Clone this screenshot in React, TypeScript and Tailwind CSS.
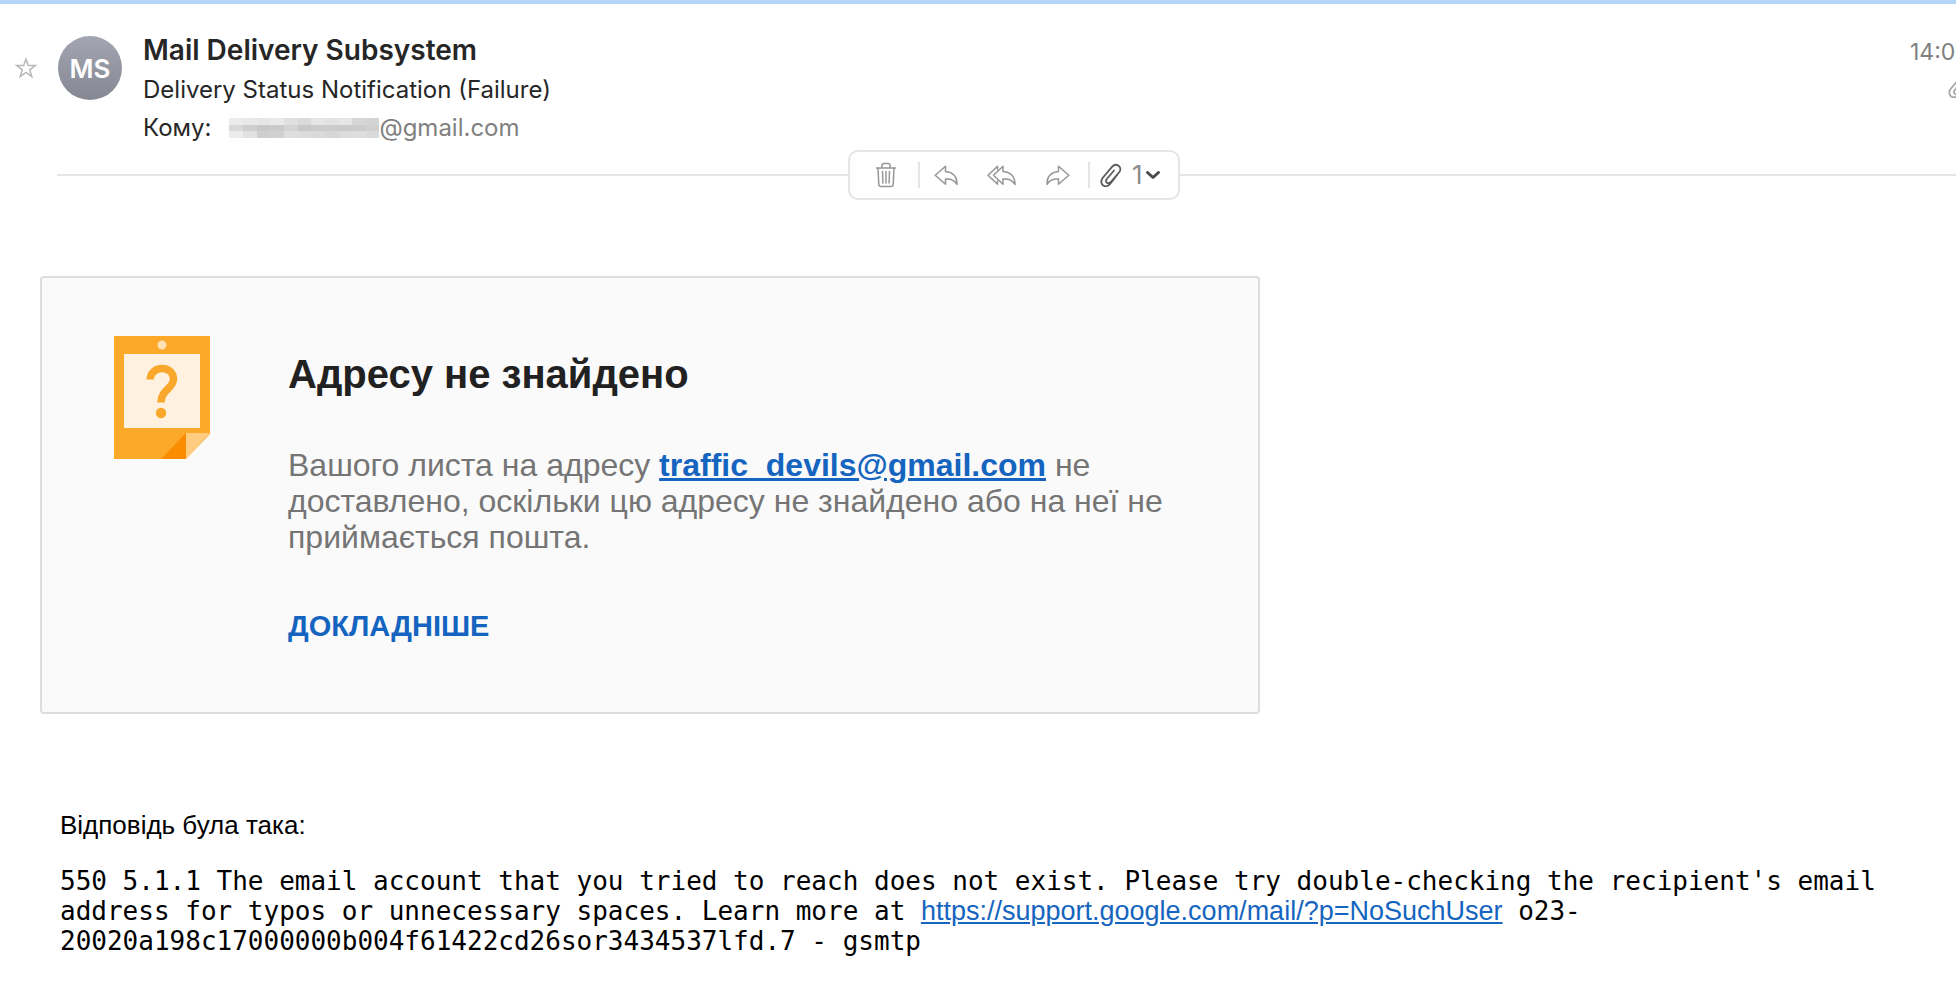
import type { ReactNode } from "react";

const MOSAIC = [
  ["#ececec", "#e8e8e8", "#e6e6e6", "#e9e9e9", "#e0e0e0", "#dadada", "#e6e6e6", "#e2e2e2", "#e6e6e6", "#d6d6d6", "#d4d4d4"],
  ["#d8d8d8", "#cecece", "#c8c8c8", "#cacaca", "#d4d4d4", "#c8c8c8", "#cccccc", "#cccccc", "#cacaca", "#cccccc", "#d0d0d0"],
  ["#ececec", "#e2e2e2", "#cecece", "#d0d0d0", "#dedede", "#dcdcdc", "#dadada", "#d6d6d6", "#dcdcdc", "#dedede", "#dadada"],
];

function ToolButton({ label, className, children }: { label: string; className: string; children: ReactNode }) {
  return (
    <button type="button" aria-label={label} className={`flex items-center justify-center ${className}`}>
      {children}
    </button>
  );
}

function TrashIcon() {
  return (
    <svg width="22" height="26" viewBox="0 0 22 26" fill="none" stroke="#969696" strokeWidth="1.5" strokeLinecap="round" strokeLinejoin="round">
      <path d="M1.500 6h19M7 6V3.500Q7 1.500 9 1.500h4Q15 1.500 15 3.500V6M3 6l.8 16.500Q4 24.500 6 24.500h10q2 0 2.200-2L19 6M7.500 9.500l.4 11.500M11 9.500V21M14.500 9.500L14.100 21" />
    </svg>
  );
}

function ReplyIcon({ flip = false }: { flip?: boolean }) {
  return (
    <svg width="24" height="21" viewBox="0 0 24 21" fill="none" stroke="#969696" strokeWidth="1.500" strokeLinejoin="round">
      <path
        transform={flip ? "matrix(-1 0 0 1 24 0)" : undefined}
        d="M11.500 1.200L1.200 10.200L11.500 19.200V14Q19.500 13.300 23 19.500Q23.300 7.500 11.500 6.400Z"
      />
    </svg>
  );
}

function ReplyAllIcon() {
  return (
    <svg width="29" height="21" viewBox="0 0 29 21" fill="none" stroke="#969696" strokeWidth="1.500" strokeLinejoin="round">
      <path d="M16 1.200L6.500 10.200L16 19.200V14Q24.500 13.300 28 19.500Q28 7.500 16 6.400Z" />
      <path d="M10.500 5V1.200L1 10.200L10.500 19.200V15.500" />
    </svg>
  );
}

function ClipIcon({ className }: { className: string }) {
  return (
    <svg className={className} width="22" height="25" viewBox="0 0 22 25" fill="none" stroke="currentColor" strokeWidth="1.800" strokeLinecap="round">
      <path d="M17.500 11.500L10.500 20.500C6 26.500-1.800 21.500 2.600 15L12.200 3.700C16-.8 23 4 19.300 9L10.800 19C8 21.800 4.500 19 6.800 16L14 7.500" />
    </svg>
  );
}

export default function App() {
  return (
    <div className="min-h-screen overflow-hidden border-t-4 border-[#b3d5f8] bg-white font-['Liberation_Sans',Arial,sans-serif] text-black">
      <header className="flex items-start pt-8 pb-1.5 font-['Inter',sans-serif]">
        <button type="button" aria-label="Star" className="mt-5 ml-3.5 shrink-0">
          <svg width="24" height="24" viewBox="0 0 24 24" fill="none" stroke="#b8b8b8" strokeWidth="1.500" strokeLinejoin="miter">
            <path d="M12 3l2.300 6.600h7l-5.600 4.200 2.100 6.800L12 16.500l-5.800 4.100 2.100-6.800-5.600-4.200h7z" />
          </svg>
        </button>
        <div className="ml-5 flex size-16 shrink-0 items-center justify-center rounded-full bg-linear-to-b from-[#a3a6b2] to-[#858892] text-[26px] font-semibold text-white">
          MS
        </div>
        <div className="-mt-0.5 ml-[21px] flex-1">
          <h1 className="text-[28px] leading-8 font-semibold text-[#262626]">Mail Delivery Subsystem</h1>
          <p className="mt-2 text-2xl leading-8 text-[#262626]">Delivery Status Notification (Failure)</p>
          <p className="mt-1.5 flex items-center text-2xl leading-8">
            <span className="text-[#262626]">Кому:</span>
            <span className="ml-[18px] flex h-5 w-[150px] flex-col overflow-hidden">
              {MOSAIC.map((row, y) => (
                <span key={y} className="flex flex-1">
                  {row.map((color, x) => (
                    <span key={x} className="flex-1" style={{ backgroundColor: color }} />
                  ))}
                </span>
              ))}
            </span>
            <span className="text-[#808080]">@gmail.com</span>
          </p>
        </div>
        <div className="flex w-[46px] shrink-0 flex-col items-start text-[#808080]">
          <time className="text-[23px] leading-8 whitespace-nowrap">14:0</time>
          <ClipIcon className="mt-1.5 ml-[38px] shrink-0 text-[#a8a8a8]" />
        </div>
      </header>

      <div className="flex items-center">
        <div className="ml-[57px] h-0.5 flex-[791] bg-[#e5e5e5]" />
        <div role="toolbar" className="flex h-[50px] w-[332px] shrink-0 items-center rounded-[10px] border-2 border-[#e5e5e5] bg-white">
          <ToolButton label="Delete" className="ml-6 w-6"><TrashIcon /></ToolButton>
          <div className="ml-5 h-[26px] w-0.5 bg-[#e5e5e5]" />
          <ToolButton label="Reply" className="ml-3.5 w-6"><ReplyIcon /></ToolButton>
          <ToolButton label="Reply all" className="ml-7 w-[30px]"><ReplyAllIcon /></ToolButton>
          <ToolButton label="Forward" className="ml-[30px] w-6"><ReplyIcon flip /></ToolButton>
          <div className="ml-[18px] h-[26px] w-0.5 bg-[#e5e5e5]" />
          <ToolButton label="Attachments" className="ml-2.5">
            <ClipIcon className="text-[#5c5c5c]" />
            <span className="ml-2.5 font-['Inter',sans-serif] text-[26px] leading-7 text-[#8e8e8e]">1</span>
            <svg className="ml-0.5" width="16" height="10" viewBox="0 0 16 10" fill="none" stroke="#4a4a4a" strokeWidth="3" strokeLinecap="round" strokeLinejoin="round">
              <path d="M2.500 2.500L8 7.500l5.500-5" />
            </svg>
          </ToolButton>
        </div>
        <div className="h-0.5 flex-[776] bg-[#e5e5e5]" />
      </div>

      <main>
        <section className="mt-[76px] ml-10 flex max-w-[1220px] items-start rounded-sm border-2 border-[#dddddd] bg-[#fafafa] pt-[58px] pb-[68px] pl-[72px]">
          <svg width="96" height="123" viewBox="0 0 96 123" className="shrink-0">
            <path d="M0 0h96v98l-24 25H0z" fill="#fca829" />
            <path d="M72 97v26H47z" fill="#fb8c00" />
            <path d="M72 97h24l-24 26z" fill="#ffcc80" />
            <path d="M10 18h76v74H10z" fill="#fef1df" />
            <circle cx="48" cy="9" r="4.500" fill="#ffe0b2" />
            <path d="M36.200 43.500C36.500 29 59.500 29 59.500 43C59.500 52.500 47 53.500 47 66.500" fill="none" stroke="#f9a82b" strokeWidth="7.500" />
            <circle cx="47" cy="77" r="5.200" fill="#f9a82b" />
          </svg>
          <div className="ml-[78px] w-[900px]">
            <h2 className="mt-3.5 text-[40px] leading-12 font-bold text-[#212121]">Адресу не знайдено</h2>
            <p className="mt-[49px] text-[32px] leading-9 text-[#757575]">
              Вашого листа на адресу{" "}
              <a href="mailto:traffic_devils@gmail.com" className="font-bold text-[#1565c0] underline">traffic_devils@gmail.com</a> не
              доставлено, оскільки цю адресу не знайдено або на неї не приймається пошта.
            </p>
            <a href="#details" className="mt-[53px] block text-[29px] leading-9 font-bold text-[#1565c0]">ДОКЛАДНІШЕ</a>
          </div>
        </section>

        <section className="mt-24 mr-16 ml-[60px]">
          <p className="text-[26px] leading-[30px]">Відповідь була така:</p>
          <p className="mt-[26px] font-['DejaVu_Sans_Mono',monospace] text-[26px] leading-[30px]">
            550 5.1.1 The email account that you tried to reach does not exist. Please try double-checking the recipient's email
            address for typos or unnecessary spaces. Learn more at{" "}
            <a href="https://support.google.com/mail/?p=NoSuchUser" className="font-['Liberation_Sans',Arial,sans-serif] text-[27px] text-[#1565c0] underline">https://support.google.com/mail/?p=NoSuchUser</a>{" "}
            o23-<br />20020a198c17000000b004f61422cd26sor3434537lfd.7 - gsmtp
          </p>
        </section>
      </main>
    </div>
  );
}
